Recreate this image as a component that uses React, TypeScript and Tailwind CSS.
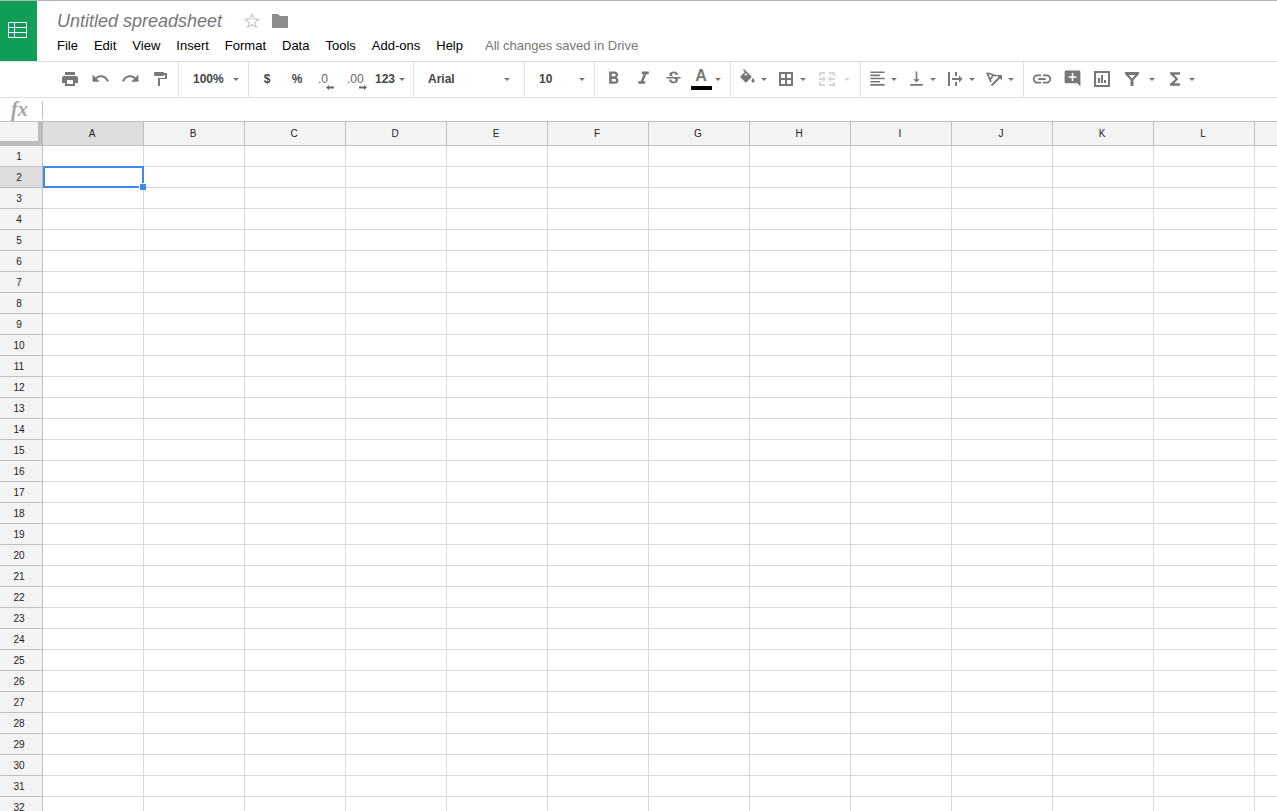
import { useState } from "react";
import type { ReactNode } from "react";
import {
  MdAddComment,
  MdFormatAlignLeft,
  MdFormatBold,
  MdFormatItalic,
  MdFunctions,
  MdInsertLink,
  MdRedo,
  MdStarBorder,
  MdStrikethroughS,
  MdUndo,
  MdVerticalAlignBottom,
} from "react-icons/md";

const MENUS = ["File", "Edit", "View", "Insert", "Format", "Data", "Tools", "Add-ons", "Help"];
const COLUMNS = "ABCDEFGHIJKLMNOPQRSTUVWXYZ".split("");
const ROWS = Array.from({ length: 100 }, (_, i) => i + 1);

// 18px icons that the icon package doesn't have in this shape
const ICONS = {
  print: "M4 2h10v3H4zM15 6H3a2 2 0 0 0-2 2v5h3v3h10v-3h3V8a2 2 0 0 0-2-2zm-3 8H6v-4h6z",
  paint: "M4 2h8a1 1 0 0 1 1 1h3v6H9v7H7V8h7V5h-1a1 1 0 0 1-1 1H4a1 1 0 0 1-1-1V3a1 1 0 0 1 1-1z",
  borders: "M2 2v14h14V2zm6 12H4v-4h4zm0-6H4V4h4zm6 6h-4v-4h4zm0-6h-4V4h4z",
  merge:
    "M1 2h6v2H3v2H1zM11 2h6v4h-2V4h-4zM1 12h2v2h4v2H1zM15 12h2v4h-6v-2h4zM1 8h4V6l3 3-3 3v-2H1zM17 8h-4V6l-3 3 3 3v-2h4z",
  wrap: "M2 2h2v14H2zM9 2h2v4H9zM9 12h2v4H9zM6 8h7V5.500L16.500 9 13 12.500V10H6z",
  chart: "M1 1v16h16V1zm14 14H3V3h12zM5 8h2v5H5zM8 5h2v8H8zM11 10h2v3h-2z",
  filter: "M2 2h14v2l-5.500 6v6h-3v-6L2 4zm4 3 3 3.500L12 5z",
  folder: "M1 2h6l2 2h8v12H1z",
};

function Icon({ name }: { name: keyof typeof ICONS }) {
  return (
    <svg width="18" height="18" viewBox="0 0 18 18" fill="currentColor" fillRule="evenodd" aria-hidden="true">
      <path d={ICONS[name]} />
    </svg>
  );
}

function FillIcon() {
  return (
    <svg width="19" height="19" viewBox="0 0 24 24" fill="currentColor" fillRule="evenodd" aria-hidden="true">
      <path d="M16.56 8.94 7.62 0 6.21 1.41l2.38 2.38-5.15 5.15a1.49 1.49 0 0 0 0 2.12l5.5 5.5c.29.29.68.44 1.06.44s.77-.15 1.06-.44l5.5-5.5c.59-.58.59-1.53 0-2.12zM7.500 8 10 5.500 12.500 8zM19 11.5s-2 2.17-2 3.5c0 1.1.9 2 2 2s2-.9 2-2c0-1.33-2-3.5-2-3.5z" />
    </svg>
  );
}

function RotationIcon() {
  return (
    <svg width="18" height="18" viewBox="0 0 18 18" fill="none" stroke="currentColor" strokeWidth="1.8" aria-hidden="true">
      <path d="M2 3l10 3M2 3l4 9M8.500 5 5 9.500M6.500 15.500 15 7" />
      <path d="M11.500 5H17v5.500z" fill="currentColor" stroke="none" />
    </svg>
  );
}

function Caret() {
  return (
    <svg width="6" height="3" viewBox="0 0 6 3" fill="currentColor" aria-hidden="true">
      <path d="M0 0h6L3 3z" />
    </svg>
  );
}

function Group({ children, className = "px-[3px]" }: { children: ReactNode; className?: string }) {
  return <div className={`flex shrink-0 border-r border-[#e0e0e0] last:border-r-0 ${className}`}>{children}</div>;
}

function Tool({ label, children }: { label: string; children: ReactNode }) {
  return (
    <button
      type="button"
      aria-label={label}
      className="flex w-[30px] items-center justify-center pb-[2px] hover:bg-gray-100"
    >
      {children}
    </button>
  );
}

function MenuTool({ label, children, wide = false, disabled = false }: {
  label: string;
  children: ReactNode;
  wide?: boolean;
  disabled?: boolean;
}) {
  return (
    <button
      type="button"
      aria-label={label}
      disabled={disabled}
      className="flex items-center pr-[2px] pb-[2px] pl-[3px] hover:bg-gray-100 disabled:text-[#d6d6d6]"
    >
      <span className={`flex justify-center ${wide ? "w-6" : "w-5"}`}>{children}</span>
      <span className={`flex justify-center pt-[2px] ${wide ? "w-4" : "w-[14px]"}`}>
        <Caret />
      </span>
    </button>
  );
}

function Picker({ label, options, className }: { label: string; options: string[]; className: string }) {
  return (
    <div className={`grid items-center ${className}`}>
      <select
        aria-label={label}
        className="col-start-1 row-start-1 h-full w-full appearance-none bg-transparent pb-[2px] pl-[14px] text-xs font-bold text-[#444] outline-none"
      >
        {options.map((o) => (
          <option key={o}>{o}</option>
        ))}
      </select>
      <span className="pointer-events-none col-start-1 row-start-1 justify-self-end pr-[9px]">
        <Caret />
      </span>
    </div>
  );
}

function Header() {
  const [title, setTitle] = useState("Untitled spreadsheet");

  return (
    <header className="flex border-t border-[#b3b3b3]">
      <a
        href="#home"
        aria-label="Sheets home"
        className="flex h-[60px] w-[37px] shrink-0 items-center bg-[#0f9d58] pb-[2px] pl-2"
      >
        <svg width="19" height="16" viewBox="0 0 19 16" fill="none" stroke="#fff" aria-hidden="true">
          <path d="M.5.5h18v15H.5zM.5 5.5h18M.5 10.5h18M6.5.5v15" />
        </svg>
      </a>
      <div className="flex flex-col pl-3">
        <div className="flex h-[35px] items-center pt-1 pl-2">
          <input
            aria-label="Document title"
            value={title}
            onChange={(e) => setTitle(e.target.value)}
            className="w-[185px] text-lg leading-6 text-[#777] italic outline-none"
          />
          <button type="button" aria-label="Star" className="text-[#ccc]">
            <MdStarBorder size={20} />
          </button>
          <button type="button" aria-label="Move to folder" className="pl-[9px] text-[#8c8c8c]">
            <Icon name="folder" />
          </button>
        </div>
        <nav className="flex items-center text-[13px] leading-5 text-black">
          {MENUS.map((m) => (
            <button key={m} type="button" className="px-2 whitespace-nowrap hover:bg-gray-100">
              {m}
            </button>
          ))}
          <span className="pl-[14px] whitespace-nowrap text-[#777]">All changes saved in Drive</span>
        </nav>
      </div>
    </header>
  );
}

function Toolbar() {
  return (
    <div role="toolbar" className="flex h-[37px] border-y border-[#e0e0e0] text-[#777]">
      <Group className="pr-[3px] pl-[55px]">
        <Tool label="Print"><Icon name="print" /></Tool>
        <Tool label="Undo"><MdUndo size={19} /></Tool>
        <Tool label="Redo"><MdRedo size={19} /></Tool>
        <Tool label="Paint format"><Icon name="paint" /></Tool>
      </Group>
      <Group className="px-0">
        <Picker label="Zoom" options={["100%", "50%", "75%", "125%", "150%"]} className="w-[69px]" />
      </Group>
      <Group>
        <Tool label="Format as currency"><span className="text-xs font-bold text-[#444]">$</span></Tool>
        <Tool label="Format as percent"><span className="text-xs font-bold text-[#444]">%</span></Tool>
        <Tool label="Decrease decimal places">
          <span className="flex w-[18px] flex-col items-start pt-[6px] text-xs leading-3 text-[#666]">
            .0
            <svg width="8" height="5" viewBox="0 0 8 5" fill="currentColor" className="ml-2" aria-hidden="true">
              <path d="M0 2.500 3 0v1.500h5v2H3V5z" />
            </svg>
          </span>
        </Tool>
        <Tool label="Increase decimal places">
          <span className="flex w-5 flex-col items-start pt-[6px] text-xs leading-3 text-[#666]">
            .00
            <svg width="8" height="5" viewBox="0 0 8 5" fill="currentColor" className="ml-3" aria-hidden="true">
              <path d="M8 2.500 5 0v1.500H0v2h5V5z" />
            </svg>
          </span>
        </Tool>
        <button
          type="button"
          aria-label="More formats"
          className="flex w-[38px] items-center gap-1 pb-[2px] pl-[3px] hover:bg-gray-100"
        >
          <span className="text-xs font-bold text-[#444]">123</span>
          <span className="pt-[2px]"><Caret /></span>
        </button>
      </Group>
      <Group className="px-0">
        <Picker label="Font" options={["Arial", "Courier New", "Georgia", "Verdana"]} className="w-[110px] pr-[5px]" />
      </Group>
      <Group className="px-0">
        <Picker label="Font size" options={["10", "11", "12", "14", "18"]} className="w-[69px]" />
      </Group>
      <Group>
        <Tool label="Bold"><MdFormatBold size={21} /></Tool>
        <Tool label="Italic"><MdFormatItalic size={21} /></Tool>
        <Tool label="Strikethrough"><MdStrikethroughS size={19} /></Tool>
        <MenuTool label="Text color">
          <span className="flex flex-col items-center gap-[2px] text-base leading-4 font-bold">
            A
            <span className="h-1 w-[21px] bg-black" />
          </span>
        </MenuTool>
      </Group>
      <Group>
        <MenuTool label="Fill color"><FillIcon /></MenuTool>
        <MenuTool label="Borders"><Icon name="borders" /></MenuTool>
        <MenuTool label="Merge cells" wide disabled><Icon name="merge" /></MenuTool>
      </Group>
      <Group>
        <MenuTool label="Horizontal align"><MdFormatAlignLeft size={19} /></MenuTool>
        <MenuTool label="Vertical align"><MdVerticalAlignBottom size={19} /></MenuTool>
        <MenuTool label="Text wrapping"><Icon name="wrap" /></MenuTool>
        <MenuTool label="Text rotation"><RotationIcon /></MenuTool>
      </Group>
      <Group>
        <Tool label="Insert link"><MdInsertLink size={22} /></Tool>
        <Tool label="Insert comment"><MdAddComment size={19} /></Tool>
        <Tool label="Insert chart"><Icon name="chart" /></Tool>
        <MenuTool label="Filter" wide><Icon name="filter" /></MenuTool>
        <MenuTool label="Functions"><MdFunctions size={20} /></MenuTool>
      </Group>
    </div>
  );
}

function FormulaBar() {
  return (
    <div className="flex h-6 items-center border-b border-[#c0c0c0]">
      <label
        htmlFor="formula"
        className="w-[42px] shrink-0 pb-[2px] pl-[11px] font-['Liberation_Serif',serif] text-xl leading-5 font-bold text-[#a3a3a3] italic"
      >
        fx
      </label>
      <input id="formula" className="h-[18px] flex-1 border-l border-[#c0c0c0] px-1 text-[13px] outline-none" />
    </div>
  );
}

function Sheet() {
  const active = { col: "A", row: 2 };

  return (
    <main className="min-h-0 flex-1 overflow-auto [scrollbar-width:none]">
      <table className="border-separate border-spacing-0 text-[10px] text-[#222]">
        <thead>
          <tr>
            <th
              aria-label="Select all"
              className="h-6 min-w-[43px] border-r-[5px] border-b-[5px] border-[#bcbcbc] bg-[#f3f3f3] p-0"
            />
            {COLUMNS.map((c) => (
              <th
                key={c}
                scope="col"
                className={`h-6 min-w-[101px] border-r border-b border-[#c0c0c0] p-0 pr-[2px] leading-5 font-normal ${
                  c === active.col ? "bg-[#ddd]" : "bg-[#f3f3f3]"
                }`}
              >
                {c}
              </th>
            ))}
          </tr>
        </thead>
        <tbody>
          {ROWS.map((r) => (
            <tr key={r}>
              <th
                scope="row"
                className={`h-[21px] border-r border-b border-[#c0c0c0] p-0 pt-[2px] pr-1 leading-[18px] font-normal ${
                  r === active.row ? "bg-[#ddd]" : "bg-[#f3f3f3]"
                }`}
              >
                {r}
              </th>
              {COLUMNS.map((c) => (
                <td key={c} className="relative border-r border-b border-[#d9d9d9] p-0">
                  {c === active.col && r === active.row && (
                    <div className="absolute -inset-y-px -right-px left-0 z-10 border-2 border-[#4285f4]">
                      <span className="absolute -right-1 -bottom-1 box-content size-[6px] border-t border-l border-white bg-[#4285f4]" />
                    </div>
                  )}
                </td>
              ))}
            </tr>
          ))}
        </tbody>
      </table>
    </main>
  );
}

export default function App() {
  return (
    <div className="flex h-screen flex-col overflow-hidden bg-white font-['Liberation_Sans',Arial,sans-serif]">
      <Header />
      <Toolbar />
      <FormulaBar />
      <Sheet />
    </div>
  );
}
